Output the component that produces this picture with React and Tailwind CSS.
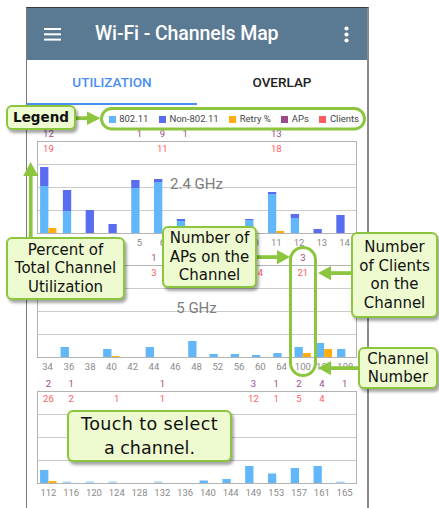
import React from 'react';

const COL = {
  light: '#62b6fa',
  dark: '#5a6cf0',
  retry: '#ffad0f',
  ap: '#9b4b8c',
  cl: '#ff5b61',
  axis: '#8a8a8a',
};

const chart1 = {
  y0: 129, h: 120, top: 141, label: '2.4 GHz',
  ch: ['1','2','3','4','5','6','7','8','9','10','11','12','13','14'],
  d: [
    { a: 12, c: 19, t: 66, w: 47, r: 5 },
    { t: 43, w: 22 },
    { t: 23, w: 0 },
    { t: 9, w: 0 },
    { a: 1, t: 53, w: 45 },
    { a: 9, c: 11, t: 54, w: 51 },
    { a: 1, t: 14, w: 12 },
    {},
    {},
    { t: 14, w: 13 },
    { a: 13, c: 18, t: 41, w: 39, r: 2 },
    { t: 19, w: 15 },
    { t: 4, w: 0 },
    { t: 18, w: 0 },
  ],
};

const chart2 = {
  y0: 249, h: 126, top: 265, label: '5 GHz',
  ch: ['34','36','38','40','42','44','46','48','52','56','60','64','100','104','108'],
  d: [
    {},
    { t: 10 },
    {},
    { t: 8, r: 1 },
    {},
    { a: 1, c: 3, t: 10 },
    {},
    { t: 16 },
    { t: 3 },
    { t: 3 },
    { c: 4, t: 2 },
    { t: 4 },
    { a: 3, c: 21, t: 10, r: 4 },
    { t: 14, r: 8 },
    { t: 8 },
  ],
};

const chart3 = {
  y0: 375, h: 126, top: 391, label: '5 GHz',
  ch: ['112','116','120','124','128','132','136','140','144','149','153','157','161','165'],
  d: [
    { a: 2, c: 26, t: 13, r: 2 },
    { a: 1, c: 2, t: 1.5 },
    { t: 1.5 },
    { c: 1, t: 1.5 },
    {},
    { a: 1, c: 1, t: 1.5 },
    {},
    { t: 2.5 },
    { t: 4 },
    { a: 3, c: 12, t: 17 },
    { a: 1, c: 1, t: 9.5 },
    { a: 2, c: 5, t: 15 },
    { a: 4, c: 4, t: 17 },
    { a: 1, t: 1.5 },
  ],
};

function Chart({ cfg }) {
  const { y0, h, top, ch, d, label } = cfg;
  const left = 37;
  const W = 319;
  const H = 92;
  const bottom = top + H;
  const n = ch.length;
  const cx = (i) => left + (i + 0.5) * (W / n);
  const font = 'Roboto, sans-serif';
  return (
    <svg width="340" height={h} viewBox={`27 ${y0} 340 ${h}`} className="block">
      {[1, 2, 3].map((k) => (
        <line key={k} x1={left} x2={left + W} y1={top + 23 * k + 0.5} y2={top + 23 * k + 0.5} stroke="#cbcbcb" strokeWidth="1" />
      ))}
      <rect x={left + 0.5} y={top + 0.5} width={W} height={H} fill="none" stroke="#b3b3b3" strokeWidth="1" />
      <text x={left + W / 2} y={top + 43} fill="#7d7d7d" fontSize="15" fontFamily={font} textAnchor="middle" dominantBaseline="central">{label}</text>
      {d.map((v, i) => {
        const c = cx(i);
        const els = [];
        if (v.t) {
          const w = v.w === undefined ? v.t : v.w;
          if (v.t > w) els.push(<rect key="d" x={c - 8.3} y={bottom - v.t} width={8.3} height={v.t - w} fill={COL.dark} />);
          if (w > 0) els.push(<rect key="l" x={c - 8.3} y={bottom - w} width={8.3} height={w} fill={v.t < 2 ? '#a9d6fb' : COL.light} />);
        }
        if (v.r) els.push(<rect key="r" x={c} y={bottom - v.r} width={8} height={v.r} fill={COL.retry} />);
        if (v.a !== undefined) els.push(<text key="a" x={c} y={top - 8} fill={COL.ap} fontSize="9.5" fontFamily={font} textAnchor="middle" dominantBaseline="central">{v.a}</text>);
        if (v.c !== undefined) els.push(<text key="c" x={c} y={top + 7} fill={COL.cl} fontSize="9.5" fontFamily={font} textAnchor="middle" dominantBaseline="central">{v.c}</text>);
        els.push(<text key="x" x={c} y={bottom + 9} fill={COL.axis} fontSize="9.5" fontFamily={font} textAnchor="middle" dominantBaseline="central">{ch[i]}</text>);
        return <g key={i}>{els}</g>;
      })}
    </svg>
  );
}

function LegendItem({ color, label }) {
  return (
    <div className="flex items-center gap-[3.5px]">
      <div className="w-[7px] h-[7px]" style={{ backgroundColor: color }} />
      <span className="text-[9.5px] text-[#454545] leading-none">{label}</span>
    </div>
  );
}

const callout =
  "absolute bg-[#eefad0] border-2 border-[#8cc63f] rounded-[6px] shadow-[2px_3px_3px_rgba(0,0,0,0.35)] flex flex-col items-center justify-center text-center text-[#111] font-['DejaVu_Sans',sans-serif]";

export default function App() {
  const G = '#8cc63f';
  return (
    <div className="relative w-[439px] h-[508px] overflow-hidden bg-white font-['Roboto',sans-serif]">
      <div className="mt-[7px] ml-[26px] w-[343px] h-[501px] border-t border-t-[#3a3a3a] border-l border-l-[#7a7a7a] border-r-2 border-r-[#8a8a8a] flex flex-col">
        <div className="h-[52px] bg-[#5a7a93] flex items-center shrink-0">
          <svg width="17" height="13" viewBox="0 0 17 13" className="ml-[17px]">
            <rect x="0" y="0" width="17" height="2" fill="#fff" />
            <rect x="0" y="5.3" width="17" height="2" fill="#fff" />
            <rect x="0" y="10.6" width="17" height="2" fill="#fff" />
          </svg>
          <div className="ml-[34px] text-white text-[19.5px] font-medium tracking-[-0.1px]">Wi-Fi - Channels Map</div>
          <svg width="5" height="17" viewBox="0 0 5 17" className="ml-auto mr-[18px]">
            <circle cx="2.5" cy="2.5" r="2.1" fill="#fff" />
            <circle cx="2.5" cy="8.5" r="2.1" fill="#fff" />
            <circle cx="2.5" cy="14.5" r="2.1" fill="#fff" />
          </svg>
        </div>
        <div className="h-[45px] flex shrink-0">
          <div className="flex-1 flex items-center justify-center text-[13.5px] font-medium text-[#4a8ef2] border-b-[2.5px] border-b-[#4a8ef2] pt-[2px]">UTILIZATION</div>
          <div className="flex-1 flex items-center justify-center text-[13.5px] font-medium text-[#212121] pb-[0.5px]">OVERLAP</div>
        </div>
        <div className="h-[20px] mt-[4px] flex items-center justify-end gap-[10.5px] pr-[8px] shrink-0">
          <LegendItem color={COL.light} label="802.11" />
          <LegendItem color={COL.dark} label="Non-802.11" />
          <LegendItem color={COL.retry} label="Retry %" />
          <LegendItem color={COL.ap} label="APs" />
          <LegendItem color={COL.cl} label="Clients" />
        </div>
        <Chart cfg={chart1} />
        <Chart cfg={chart2} />
        <Chart cfg={chart3} />
      </div>

      <svg className="absolute inset-0 pointer-events-none" width="439" height="508" viewBox="0 0 439 508">
        <rect x="101.5" y="108.5" width="263" height="20.5" rx="10.25" fill="none" stroke={G} strokeWidth="3" />
        <rect x="290.5" y="247.5" width="25" height="128" rx="12.5" fill="none" stroke={G} strokeWidth="3" />
        <rect x="75" y="116.3" width="15" height="3.8" fill={G} />
        <polygon points="87,111.5 100.5,118.2 87,125" fill={G} />
        <rect x="28.8" y="172" width="3.8" height="66" fill={G} />
        <polygon points="23.2,176 30.7,162 38.2,176" fill={G} />
        <rect x="256" y="255.2" width="23" height="3.8" fill={G} />
        <polygon points="277,250 290,257.1 277,264.2" fill={G} />
        <rect x="330" y="271.2" width="22" height="3.8" fill={G} />
        <polygon points="331,266 318,273.1 331,280.2" fill={G} />
        <rect x="330" y="366.2" width="29" height="3.8" fill={G} />
        <polygon points="331,361 318,368.1 331,375.2" fill={G} />
      </svg>

      <div className={callout + ' left-[6px] top-[105px] w-[70px] h-[25px]'}>
        <span className="text-[13.5px] font-bold leading-none">Legend</span>
      </div>
      <div className={callout + ' left-[6px] top-[237px] w-[119px] h-[63px] text-[15px] leading-[18.5px]'}>
        <span>Percent of</span>
        <span>Total Channel</span>
        <span>Utilization</span>
      </div>
      <div className={callout + ' left-[162px] top-[226px] w-[95px] h-[62px] text-[15px] leading-[18.5px]'}>
        <span>Number of</span>
        <span>APs on the</span>
        <span>Channel</span>
      </div>
      <div className={callout + ' left-[351px] top-[232px] w-[87px] h-[86px] text-[15px] leading-[18.5px]'}>
        <span>Number</span>
        <span>of Clients</span>
        <span>on the</span>
        <span>Channel</span>
      </div>
      <div className={callout + ' left-[358px] top-[347px] w-[80px] h-[42px] text-[15px] leading-[18px]'}>
        <span>Channel</span>
        <span>Number</span>
      </div>
      <div className={callout + ' left-[67px] top-[410px] w-[165px] h-[52px] text-[17.5px] leading-[24px]'}>
        <span className="tracking-[0.4px]">Touch to select</span>
        <span>a channel.</span>
      </div>
    </div>
  );
}
